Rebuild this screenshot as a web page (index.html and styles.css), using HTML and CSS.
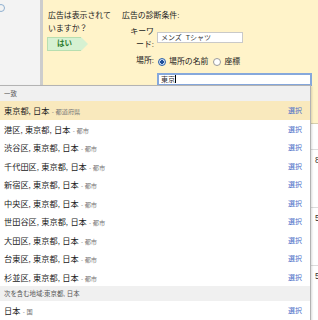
FILE: index.html
```html
<!DOCTYPE html>
<html lang="ja">
<head>
  <meta charset="UTF-8" />
  <title>広告の診断</title>
  <link rel="stylesheet" href="styles.css">
</head>
<body>
  <div class="page">
    <aside class="side">
      <span class="help"></span>
    </aside>

    <div class="main">
      <!-- Diagnosis panel -->
      <section class="panel">
        <div class="status">
          <p>広告は表示されていますか？</p>
          <span class="tag">はい</span>
        </div>
        <div class="diag">
          <p class="diag-title">広告の診断条件:</p>
          <div class="form">
            <label class="label">キーワ<br>ード:</label>
            <div class="field"><span class="box keyword">メンズ&nbsp; Tシャツ</span></div>

            <label class="label">場所:</label>
            <div class="field radios">
              <span class="radio on"></span><span>場所の名前</span>
              <span class="radio"></span><span>座標</span>
            </div>

            <span class="label"></span>
            <div class="field"><span class="box place">東京<i class="caret"></i></span></div>
          </div>
        </div>
      </section>

      <!-- Stats behind the menu -->
      <div class="stats">
        <div class="stat-row head"></div>
        <div class="stat-row"><span class="num">85</span></div>
        <div class="stat-row"><span class="num">51</span></div>
        <div class="stat-row"><span class="num">56</span></div>
      </div>
    </div>

    <!-- Location suggestions -->
    <div class="menu">
      <div class="group">一致</div>
      <div class="item active"><span>東京都, 日本 <small>- 都道府県</small></span><a>選択</a></div>
      <div class="item"><span>港区, 東京都, 日本 <small>- 都市</small></span><a>選択</a></div>
      <div class="item"><span>渋谷区, 東京都, 日本 <small>- 都市</small></span><a>選択</a></div>
      <div class="item"><span>千代田区, 東京都, 日本 <small>- 都市</small></span><a>選択</a></div>
      <div class="item"><span>新宿区, 東京都, 日本 <small>- 都市</small></span><a>選択</a></div>
      <div class="item"><span>中央区, 東京都, 日本 <small>- 都市</small></span><a>選択</a></div>
      <div class="item"><span>世田谷区, 東京都, 日本 <small>- 都市</small></span><a>選択</a></div>
      <div class="item"><span>大田区, 東京都, 日本 <small>- 都市</small></span><a>選択</a></div>
      <div class="item"><span>台東区, 東京都, 日本 <small>- 都市</small></span><a>選択</a></div>
      <div class="item"><span>杉並区, 東京都, 日本 <small>- 都市</small></span><a>選択</a></div>
      <div class="group">次を含む地域:東京都, 日本</div>
      <div class="item"><span>日本 <small>- 国</small></span><a>選択</a></div>
    </div>
  </div>
</body>
</html>
```

FILE: styles.css
```css
body {
  margin: 0;
  width: 318px;
  height: 320px;
  overflow: hidden;
  font-family: 'Liberation Sans', 'Noto Sans CJK JP', sans-serif;
  color: #222;
  background: #fff;
}

p {
  margin: 0;
}

.page {
  position: relative;
  display: flex;
  height: 320px;
}

.side {
  flex: 0 0 40px;
  background: #f3f3f3;
  border-right: 3px solid #cdcdcd;
}

.help {
  display: block;
  width: 6px;
  height: 6px;
  margin: 4px 0 0 -3px;
  border: 1px solid #8fb0d0;
  border-radius: 50%;
}

.main {
  flex: 0 0 300px;
}

/* Yellow diagnosis panel */
.panel {
  display: flex;
  height: 124px;
  box-sizing: border-box;
  padding: 9px 0 0 5px;
  background: #fff3c9;
  border-bottom: 1px solid #d6cfae;
  font-size: 7.9px;
  line-height: 13px;
}

.status {
  flex: 0 0 74px;
}

.status p {
  width: 65px;
}

.tag {
  position: relative;
  display: block;
  width: 33px;
  height: 12px;
  margin: 2px 0 0 -1px;
  background: #d6f1d2;
  border: 1px solid #b7deb0;
  border-right: none;
  color: #2f7d2f;
  font-weight: bold;
  font-size: 7.5px;
  line-height: 12px;
  text-align: center;
}

.tag::after {
  content: "";
  position: absolute;
  top: -1px;
  right: -7px;
  border-top: 7px solid transparent;
  border-bottom: 7px solid transparent;
  border-left: 7px solid #d6f1d2;
}

.diag-title {
  margin-bottom: 3px;
}

.form {
  display: grid;
  grid-template-columns: 32px 1fr;
  column-gap: 3px;
  align-items: center;
}

.label {
  text-align: right;
}

.field {
  display: flex;
  align-items: center;
}

.box {
  display: block;
  box-sizing: border-box;
  background: #fff;
  font-size: 7px;
  color: #333;
}

.keyword {
  width: 86px;
  height: 11px;
  margin-top: -1px;
  padding-left: 3px;
  border: 1px solid #c9c9c9;
  line-height: 9px;
}

.radios {
  height: 13px;
  margin: 4px 0 2px;
}

.radio {
  width: 6px;
  height: 6px;
  margin: 0 3px 0 1px;
  border: 1px solid #9a9a9a;
  border-radius: 50%;
  background: #fff;
}

.radio.on {
  border-color: #2a5fa8;
  background: radial-gradient(circle, #1f4f9a 0 1.6px, #cfe0f5 2px);
}

.radios span + .radio {
  margin-left: 5px;
}

.place {
  width: 155px;
  height: 13px;
  margin-top: 3px;
  padding-left: 2px;
  border: 2px solid #86a8dc;
  line-height: 9px;
}

.caret {
  display: inline-block;
  width: 1px;
  height: 8px;
  background: #000;
  vertical-align: -1px;
}

/* Stats table behind the menu */
.stats {
  font-size: 8.5px;
  color: #333;
}

.stat-row {
  height: 58px;
  border-bottom: 1px solid #ddd;
  padding-left: 270px;
  box-sizing: border-box;
}

.stat-row.head {
  height: 26px;
}

.num {
  display: block;
  padding: 5px 0 0 2px;
}

/* Suggestions menu */
.menu {
  position: absolute;
  top: 85px;
  left: -1px;
  width: 310px;
  background: #fff;
  border: 1px solid #b3b3b3;
  box-shadow: 1px 1px 2px rgba(0, 0, 0, 0.15);
}

.group {
  height: 15px;
  padding-left: 4px;
  background: #f0f0f0;
  color: #555;
  font-size: 6.4px;
  line-height: 15px;
}

.item {
  display: flex;
  justify-content: space-between;
  align-items: center;
  height: 18.5px;
  padding: 0 8px 0 4px;
  font-size: 8.2px;
}

.item.active {
  background: #f9e9bd;
}

.item small {
  color: #777;
  font-size: 6.2px;
}

.item a {
  color: #4f72c9;
  font-size: 7px;
}
```
